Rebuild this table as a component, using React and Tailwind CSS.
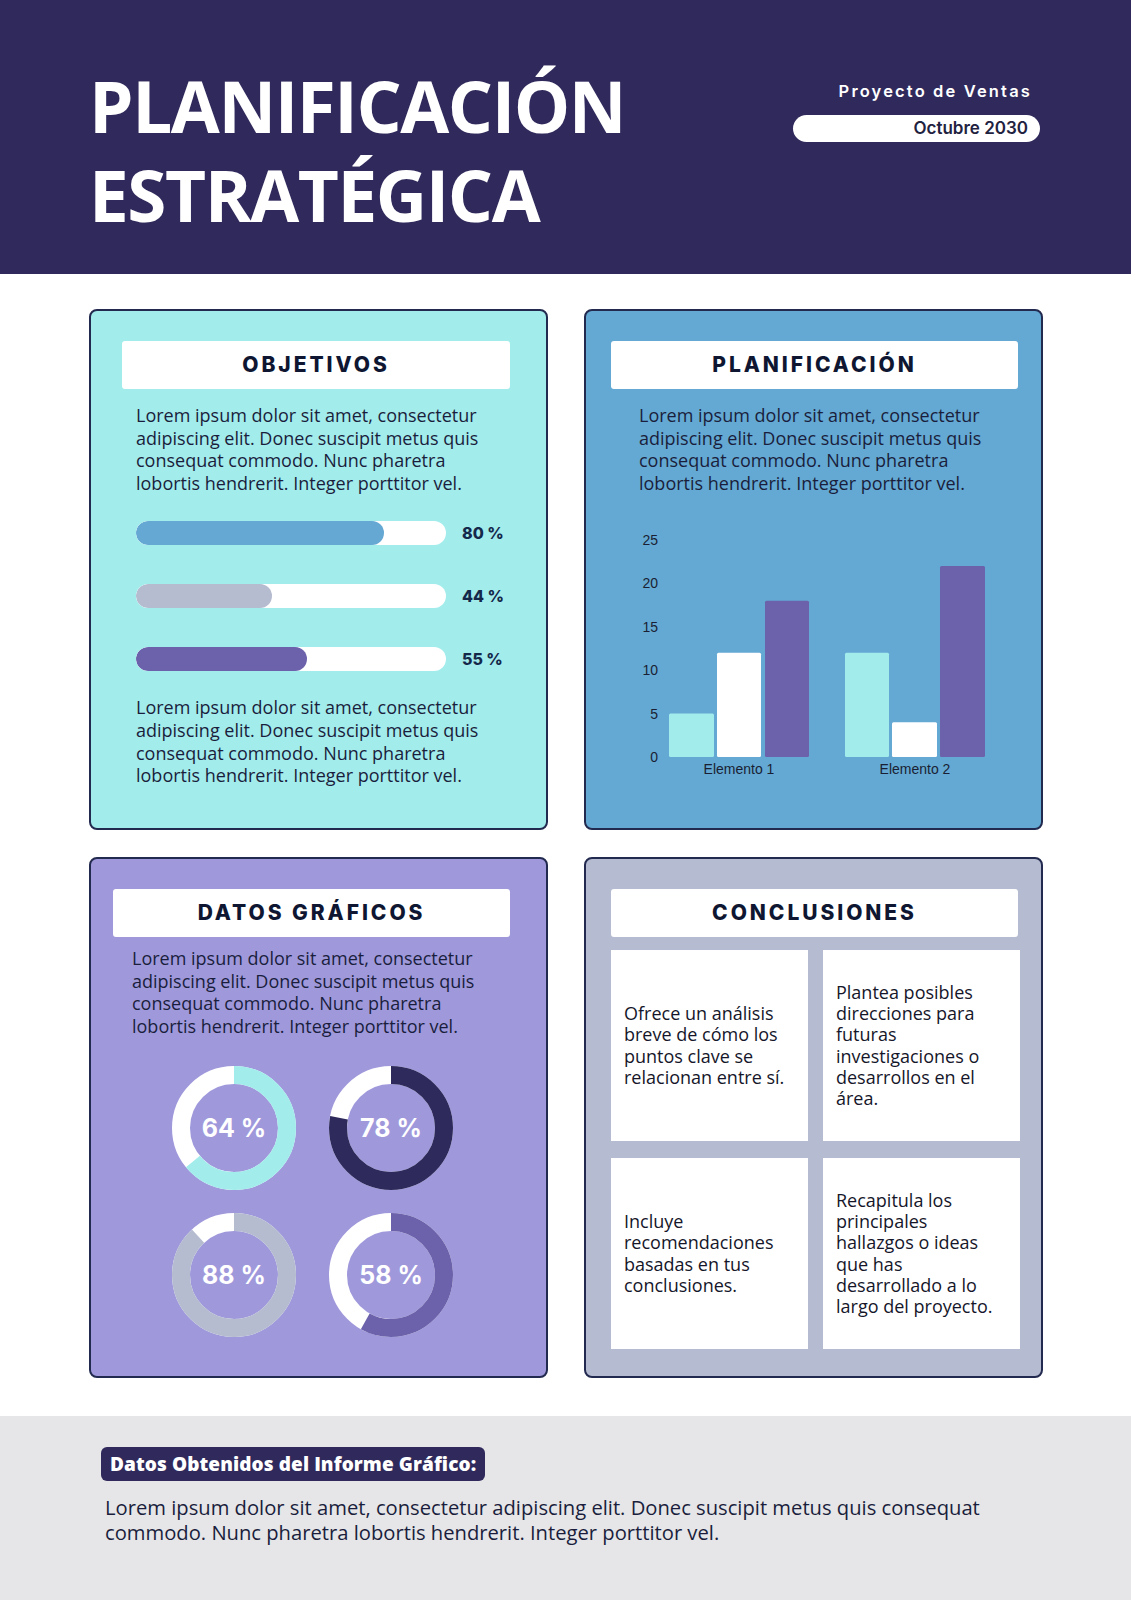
import React from "react";

const body = "font-['Open_Sans',sans-serif]";
const head = "font-['Inter',sans-serif]";

function Para({ lines, className = "" }) {
  return (
    <p className={`${body} text-[18px] leading-[22.6px] text-[#1a1e3c] ${className}`}>
      {lines.map((l, i) => (
        <React.Fragment key={i}>
          {l}
          {i < lines.length - 1 && <br />}
        </React.Fragment>
      ))}
    </p>
  );
}

const LOREM = [
  "Lorem ipsum dolor sit amet, consectetur",
  "adipiscing elit. Donec suscipit metus quis",
  "consequat commodo. Nunc pharetra",
  "lobortis hendrerit. Integer porttitor vel.",
];

function TitleBox({ children, className = "" }) {
  return (
    <div className={`h-[48px] bg-white rounded-[3px] flex items-center justify-center ${className}`}>
      <span className={`${head} font-extrabold text-[21px] tracking-[0.14em] text-[#0e1631]`}>{children}</span>
    </div>
  );
}

function Bar({ pct, color }) {
  return (
    <div className="flex items-center">
      <div className="w-[310px] h-[24px] rounded-full bg-white overflow-hidden">
        <div className={`h-full rounded-full ${color}`} style={{ width: `${pct}%` }} />
      </div>
      <span className={`${head} ml-[16px] font-extrabold text-[16px] text-[#14284a]`}>{pct} %</span>
    </div>
  );
}

function Donut({ pct, color, label }) {
  const r = 53;
  const c = 2 * Math.PI * r;
  return (
    <div className="relative w-[124px] h-[124px]">
      <svg width="124" height="124" viewBox="0 0 124 124">
        <circle cx="62" cy="62" r={r} fill="none" stroke="#ffffff" strokeWidth="18" />
        <circle
          cx="62"
          cy="62"
          r={r}
          fill="none"
          stroke={color}
          strokeWidth="18"
          strokeDasharray={`${(c * pct) / 100} ${c}`}
          transform="rotate(-90 62 62)"
        />
      </svg>
      <div className={`absolute inset-0 flex items-center justify-center ${head} font-bold text-[25px] text-white`}>
        {label}
      </div>
    </div>
  );
}

function Chart() {
  const base = 232;
  const u = 8.68;
  const bars = [
    { x: 48, w: 45, v: 5, c: "#a3ecec" },
    { x: 96, w: 44, v: 12, c: "#ffffff" },
    { x: 144, w: 44, v: 18, c: "#6b62ab" },
    { x: 224, w: 44, v: 12, c: "#a3ecec" },
    { x: 271, w: 45, v: 4, c: "#ffffff" },
    { x: 319, w: 45, v: 22, c: "#6b62ab" },
  ];
  const ticks = [25, 20, 15, 10, 5, 0];
  const font = "Liberation Sans, Arial, sans-serif";
  return (
    <svg width="400" height="262" viewBox="0 0 400 262" className="block">
      {ticks.map((t) => (
        <text
          key={t}
          x="37"
          y={base - t * u}
          textAnchor="end"
          dominantBaseline="central"
          fontFamily={font}
          fontSize="14"
          fill="#1a1f33"
        >
          {t}
        </text>
      ))}
      {bars.map((b, i) => (
        <rect key={i} x={b.x} y={base - b.v * u} width={b.w} height={b.v * u} fill={b.c} rx="1.5" />
      ))}
      <text x="118" y="244" textAnchor="middle" dominantBaseline="central" fontFamily={font} fontSize="14" fill="#1a1f33">
        Elemento 1
      </text>
      <text x="294" y="244" textAnchor="middle" dominantBaseline="central" fontFamily={font} fontSize="14" fill="#1a1f33">
        Elemento 2
      </text>
    </svg>
  );
}

function ConcBox({ lines }) {
  return (
    <div className="h-[191px] bg-white flex items-center pl-[13px] pr-[4px]">
      <p className={`${body} text-[18px] leading-[21.2px] text-[#15162a]`}>
        {lines.map((l, i) => (
          <React.Fragment key={i}>
            {l}
            {i < lines.length - 1 && <br />}
          </React.Fragment>
        ))}
      </p>
    </div>
  );
}

export default function App() {
  return (
    <div className="w-[1131px] h-[1600px] bg-white flex flex-col">
      {/* Header */}
      <header className="h-[274px] bg-[#302a5c] flex justify-between pl-[89px] pr-[91px] shrink-0">
        <h1 className="pt-[61px] font-['Open_Sans',sans-serif] font-bold text-[71px] leading-[89px] text-white tracking-[-0.02em] whitespace-nowrap">
          PLANIFICACIÓN
          <br />
          ESTRATÉGICA
        </h1>
        <div className="pt-[79px] flex flex-col items-end w-[247px]">
          <div className={`${head} font-semibold text-[16.5px] leading-[24px] tracking-[0.13em] text-white pr-[8px]`}>
            Proyecto de Ventas
          </div>
          <div className="mt-[12px] w-[247px] h-[27px] rounded-full bg-white flex items-center justify-end pr-[12px]">
            <span className={`${head} font-semibold text-[17px] text-[#1f2240]`}>Octubre 2030</span>
          </div>
        </div>
      </header>

      {/* Cards */}
      <main className="grid grid-cols-2 grid-rows-[521px_521px] gap-x-[36px] gap-y-[27px] pt-[35px] pb-[38px] pl-[89px] pr-[88px] shrink-0">
        {/* Objetivos */}
        <section className="border-2 border-[#232a4f] rounded-[8px] bg-[#a3ecec] pt-[30px] flex flex-col">
          <TitleBox className="ml-[31px] w-[388px]">OBJETIVOS</TitleBox>
          <Para className="ml-[45px] mt-[15px]" lines={LOREM} />
          <div className="ml-[45px] mt-[27px] flex flex-col gap-[39px]">
            <Bar pct={80} color="bg-[#64a8d3]" />
            <Bar pct={44} color="bg-[#b5bcd0]" />
            <Bar pct={55} color="bg-[#6b62ab]" />
          </div>
          <Para className="ml-[45px] mt-[25px]" lines={LOREM} />
        </section>

        {/* Planificación */}
        <section className="border-2 border-[#232a4f] rounded-[8px] bg-[#64a9d3] pt-[30px] flex flex-col">
          <TitleBox className="ml-[25px] w-[407px]">PLANIFICACIÓN</TitleBox>
          <Para className="ml-[53px] mt-[15px]" lines={LOREM} />
          <div className="ml-[35px] mt-[31px]">
            <Chart />
          </div>
        </section>

        {/* Datos gráficos */}
        <section className="border-2 border-[#232a4f] rounded-[8px] bg-[#9f99dc] pt-[30px] flex flex-col">
          <TitleBox className="ml-[22px] w-[397px]">DATOS GRÁFICOS</TitleBox>
          <Para className="ml-[41px] mt-[10px]" lines={LOREM} />
          <div className="ml-[81px] mt-[29px] grid grid-cols-[124px_124px] gap-x-[33px] gap-y-[23px]">
            <Donut pct={64} color="#a3ecec" label="64 %" />
            <Donut pct={78} color="#2f2a5c" label="78 %" />
            <Donut pct={88} color="#b5bcd0" label="88 %" />
            <Donut pct={58} color="#6b62ab" label="58 %" />
          </div>
        </section>

        {/* Conclusiones */}
        <section className="border-2 border-[#232a4f] rounded-[8px] bg-[#b5bcd1] pt-[30px] flex flex-col">
          <TitleBox className="ml-[25px] w-[407px]">CONCLUSIONES</TitleBox>
          <div className="ml-[25px] mt-[13px] grid grid-cols-[197px_197px] gap-x-[15px] gap-y-[17px]">
            <ConcBox lines={["Ofrece un análisis", "breve de cómo los", "puntos clave se", "relacionan entre sí."]} />
            <ConcBox
              lines={["Plantea posibles", "direcciones para", "futuras", "investigaciones o", "desarrollos en el", "área."]}
            />
            <ConcBox lines={["Incluye", "recomendaciones", "basadas en tus", "conclusiones."]} />
            <ConcBox
              lines={["Recapitula los", "principales", "hallazgos o ideas", "que has", "desarrollado a lo", "largo del proyecto."]}
            />
          </div>
        </section>
      </main>

      {/* Footer */}
      <footer className="flex-1 bg-[#e6e6e8] pt-[31px] pl-[101px]">
        <div className="inline-flex items-center h-[34px] px-[9px] rounded-[6px] bg-[#302a5c]">
          <span className={`${body} font-extrabold text-[19px] tracking-[0.005em] text-white`}>Datos Obtenidos del Informe Gráfico:</span>
        </div>
        <p className={`${body} ml-[4px] mt-[14px] text-[20.2px] leading-[25px] text-[#1a1e3c]`}>
          Lorem ipsum dolor sit amet, consectetur adipiscing elit. Donec suscipit metus quis consequat
          <br />
          commodo. Nunc pharetra lobortis hendrerit. Integer porttitor vel.
        </p>
      </footer>
    </div>
  );
}
